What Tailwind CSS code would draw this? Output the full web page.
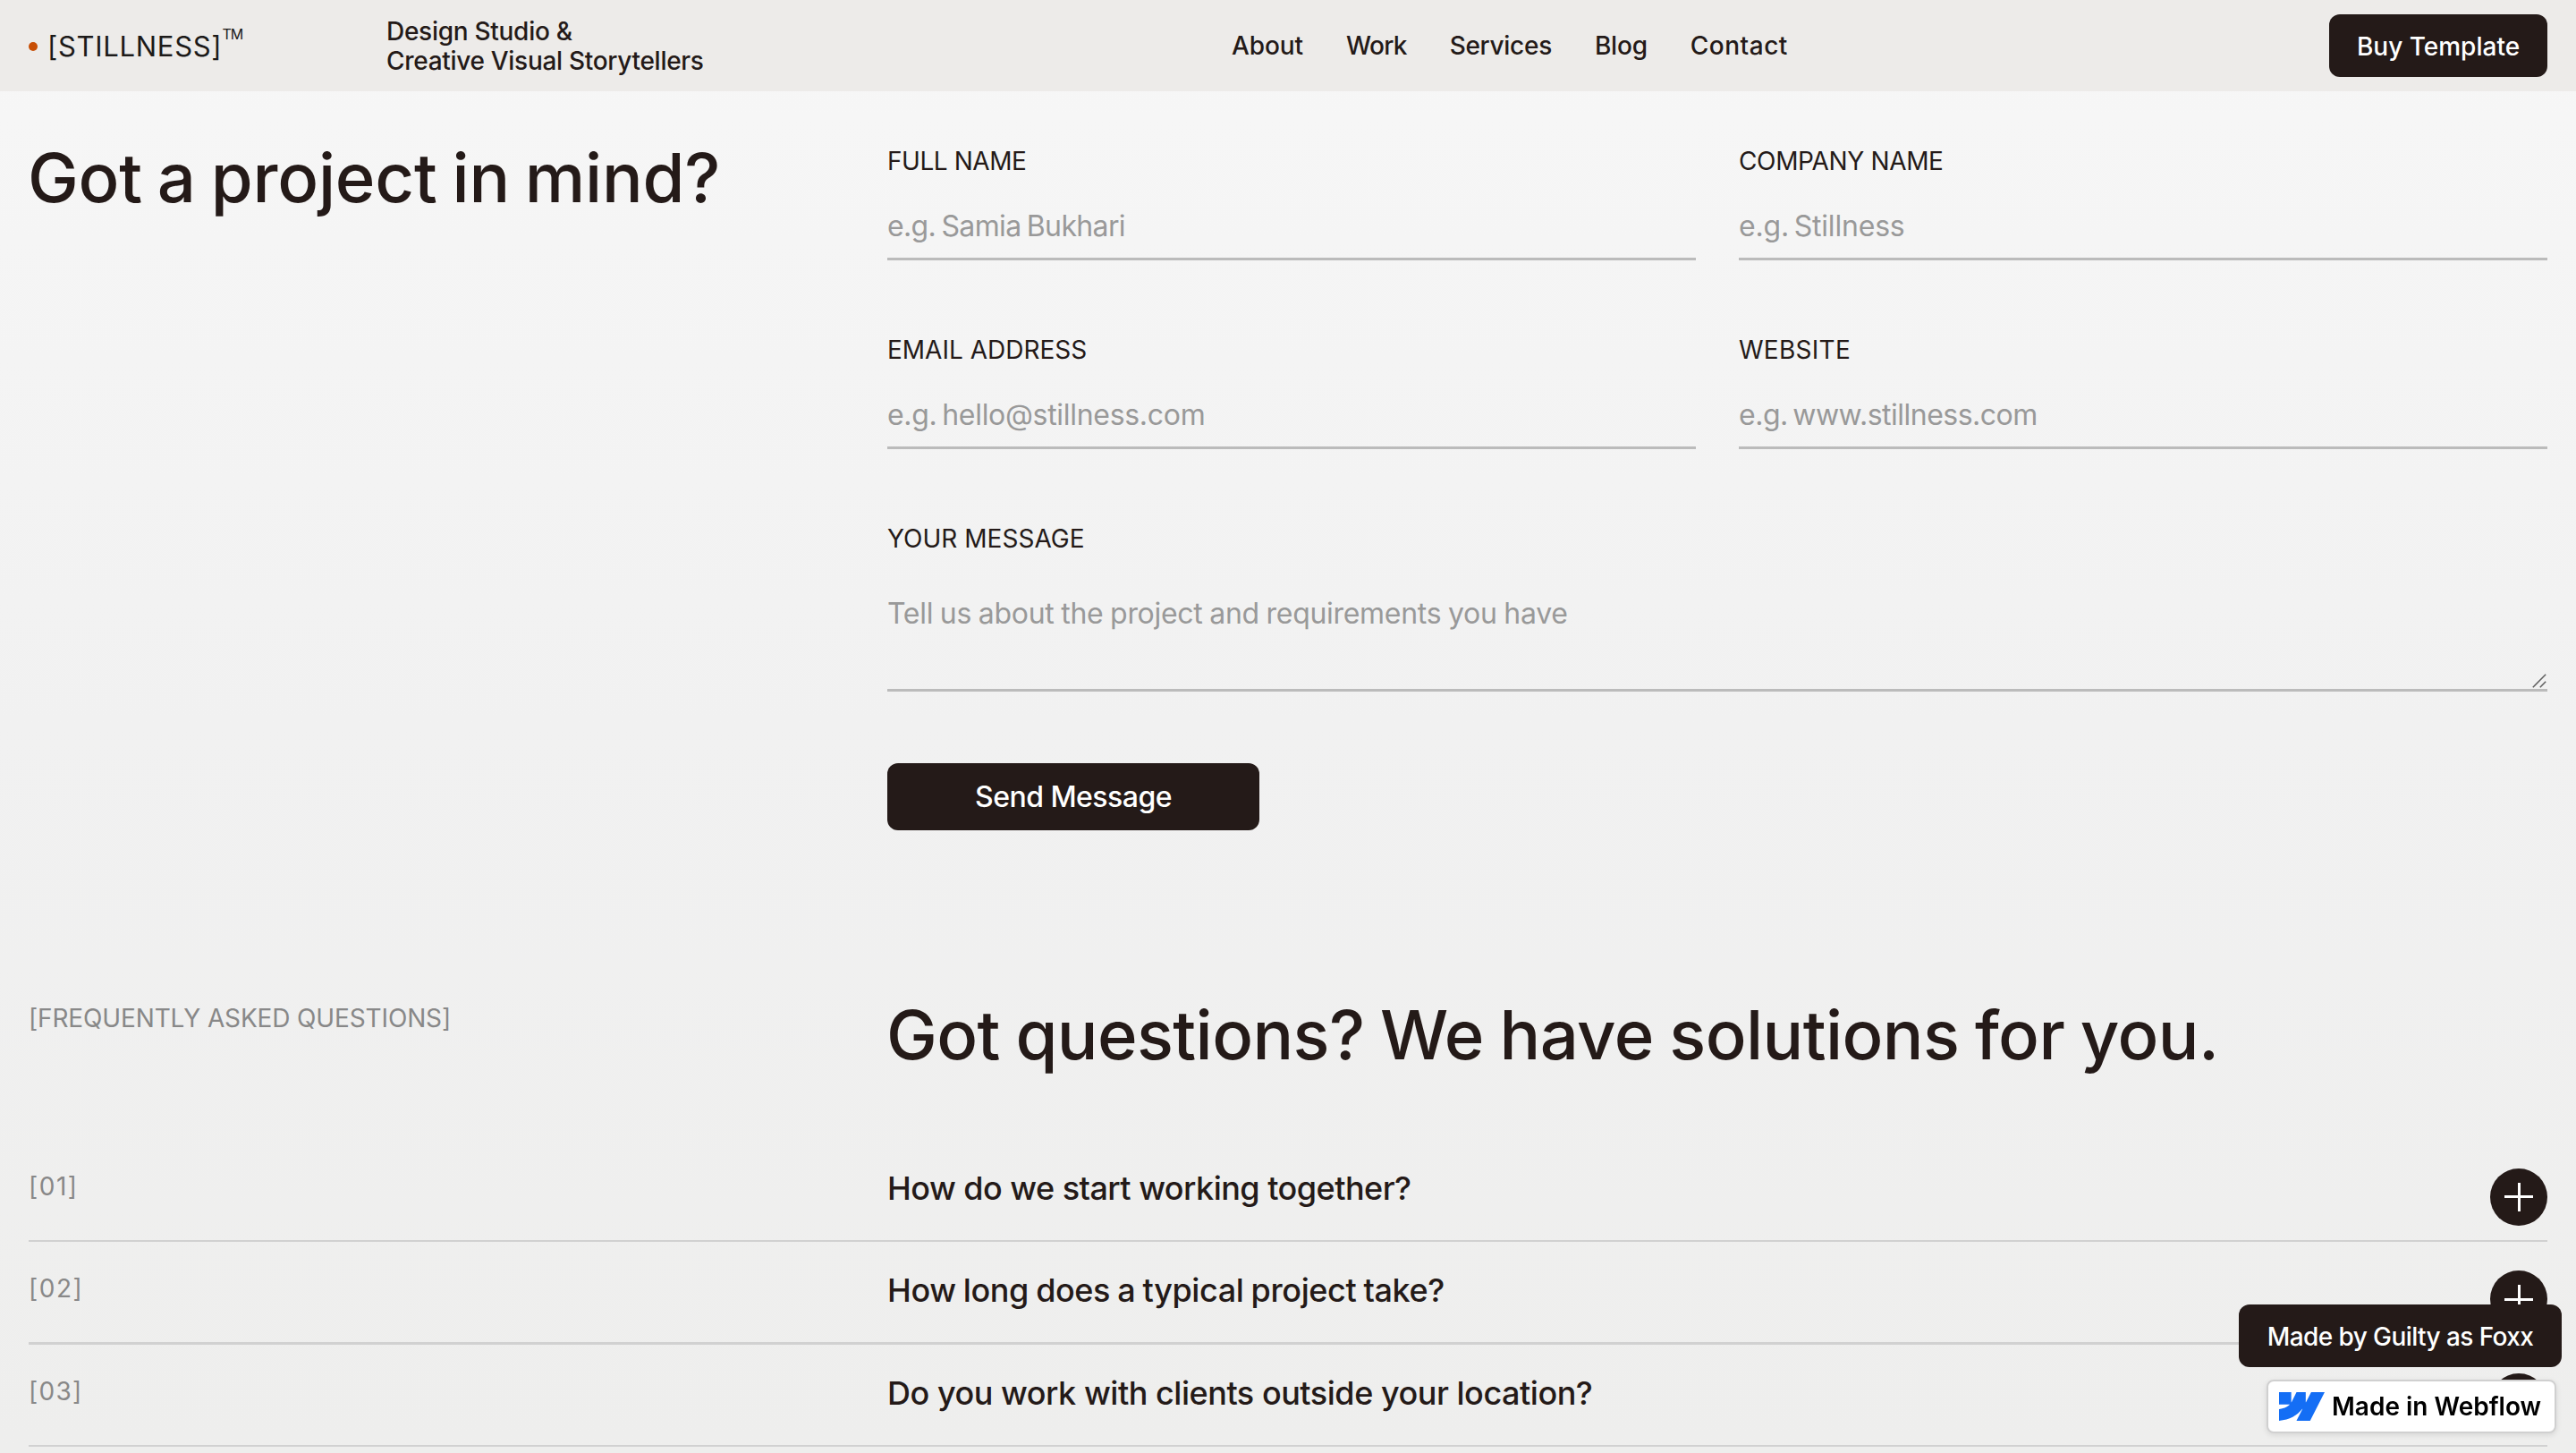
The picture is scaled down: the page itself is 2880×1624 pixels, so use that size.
<!DOCTYPE html>
<html lang="en">
<head>
  <meta charset="UTF-8">
  <meta name="viewport" content="width=device-width, initial-scale=1.0">
  <title>Stillness - Contact</title>
  <script src="https://cdn.jsdelivr.net/npm/@tailwindcss/browser@4"></script>
</head>
<body class="h-[1624px] overflow-hidden bg-linear-to-b from-[#f7f7f7] via-[#f1f1f1] to-[#eeeeed] font-['Inter','Liberation_Sans',sans-serif] text-[#241a18] antialiased">

  <!-- Navbar -->
  <header class="flex h-[102px] items-center bg-[#edebe9] px-8 text-[28px] font-medium">
    <a href="#" class="flex h-full w-[400px] items-center text-[#1c1a19]">
      <span class="mt-px mr-[11px] size-2.5 rounded-full bg-[#c84e05]"></span>
      <span class="mt-[2px] text-[31px] leading-[40px] font-normal tracking-[0.7px]">[STILLNESS]</span>
      <span class="mt-[30px] self-start text-[16px] leading-[16px] font-normal tracking-[-0.9px]">TM</span>
    </a>
    <div class="w-[945px] pt-[2px] leading-[33.3px]">
      <p class="tracking-[-0.28px]">Design Studio &amp;</p>
      <p class="tracking-[-0.3px]">Creative Visual Storytellers</p>
    </div>
    <nav class="flex gap-12">
      <a href="#" class="tracking-[-0.1px]">About</a>
      <a href="#" class="tracking-[-0.7px]">Work</a>
      <a href="#" class="tracking-[-0.3px]">Services</a>
      <a href="#" class="tracking-[-0.2px]">Blog</a>
      <a href="#" class="tracking-[0.5px]">Contact</a>
    </nav>
    <a href="#" class="ml-auto flex h-[70px] w-[244px] items-center justify-center rounded-xl bg-[#241a18] pt-[2px] text-white">Buy Template</a>
  </header>

  <main class="px-8">
    <!-- Contact form -->
    <section class="grid grid-cols-[960px_1fr] pt-[61px]">
      <h2 class="-mt-[7px] -ml-px text-[76px] leading-[84px] font-medium tracking-[-0.2px] [word-spacing:-3.2px]">Got a project in mind?</h2>
      <form>
        <div class="grid grid-cols-2 gap-x-12 gap-y-[83px] text-[28px] leading-[34px]">
          <div>
            <label for="name" class="block tracking-[-0.45px]">FULL NAME</label>
            <input id="name" type="text" placeholder="e.g. Samia Bukhari" class="block h-[94px] w-full border-b-3 border-[#bbbbbb] pt-5 text-[32px] tracking-[-0.65px] [word-spacing:-2px] outline-none placeholder:text-[#999999]">
          </div>
          <div>
            <label for="company" class="block tracking-[-0.35px]">COMPANY NAME</label>
            <input id="company" type="text" placeholder="e.g. Stillness" class="block h-[94px] w-full border-b-3 border-[#bbbbbb] pt-5 text-[32px] tracking-[-0.2px] [word-spacing:-3px] outline-none placeholder:text-[#999999]">
          </div>
          <div>
            <label for="email" class="block">EMAIL ADDRESS</label>
            <input id="email" type="email" placeholder="e.g. hello@stillness.com" class="block h-[94px] w-full border-b-3 border-[#bbbbbb] pt-5 text-[32px] tracking-[-0.3px] [word-spacing:-3px] outline-none placeholder:text-[#999999]">
          </div>
          <div>
            <label for="website" class="block tracking-[0.28px]">WEBSITE</label>
            <input id="website" type="text" placeholder="e.g. www.stillness.com" class="block h-[94px] w-full border-b-3 border-[#bbbbbb] pt-5 text-[32px] tracking-[-0.5px] [word-spacing:-3px] outline-none placeholder:text-[#999999]">
          </div>
          <div class="relative col-span-2">
            <label for="message" class="block tracking-[0.02px]">YOUR MESSAGE</label>
            <textarea id="message" placeholder="Tell us about the project and requirements you have" class="block h-[154px] w-full resize-none border-b-3 border-[#bbbbbb] pt-[47px] text-[32px] leading-[40px] tracking-[-0.29px] [word-spacing:-1px] outline-none placeholder:text-[#999999]"></textarea>
            <svg class="absolute right-px bottom-1 size-4" viewBox="0 0 16 16" fill="none" stroke="#5e5e5e" stroke-width="1.5">
              <path d="M.8 15.2 15.2.8M8.8 15.2l6.4-6.4"/>
            </svg>
          </div>
        </div>
        <button type="submit" class="mt-20 flex h-[75px] w-[416px] items-center justify-center rounded-xl bg-[#241a18] text-[32px] font-medium tracking-[-0.53px] text-white">Send Message</button>
      </form>
    </section>

    <!-- FAQ -->
    <section class="pt-[187px]">
      <div class="grid grid-cols-[960px_1fr]">
        <p class="pt-[6px] text-[28px] leading-[34px] tracking-[-0.14px] text-[#888888]">[FREQUENTLY ASKED QUESTIONS]</p>
        <h2 class="-mt-px mb-px -ml-px text-[76px] leading-[84px] font-medium tracking-[-0.6px] [word-spacing:-2px]">Got questions? We have solutions for you.</h2>
      </div>

      <div class="mt-[75px]">
        <div class="grid grid-cols-[960px_1fr_64px] border-b-2 border-[#d1d1d1] pt-8 pb-4">
          <span class="mt-[3px] text-[28px] leading-[34px] tracking-[1.5px] text-[#888888]">[01]</span>
          <h3 class="text-[36px] leading-[44px] font-medium tracking-[-0.53px]">How do we start working together?</h3>
          <svg class="size-16" viewBox="0 0 64 64"><circle cx="32" cy="32" r="32" fill="#241a18"/><path d="M16 30h32v3H16zM31 16h3v32h-3z" fill="#fff"/></svg>
        </div>
        <div class="grid grid-cols-[960px_1fr_64px] border-b-3 border-[#d1d1d1] pt-8 pb-4">
          <span class="mt-[3px] text-[28px] leading-[34px] tracking-[1.5px] text-[#888888]">[02]</span>
          <h3 class="text-[36px] leading-[44px] font-medium tracking-[-0.4px] [word-spacing:-1px]">How long does a typical project take?</h3>
          <svg class="size-16" viewBox="0 0 64 64"><circle cx="32" cy="32" r="32" fill="#241a18"/><path d="M16 31h32v3H16zM31 16h3v32h-3z" fill="#fff"/></svg>
        </div>
        <div class="grid grid-cols-[960px_1fr_64px] border-b-2 border-[#d1d1d1] pt-8 pb-4">
          <span class="mt-[3px] text-[28px] leading-[34px] tracking-[1.3px] text-[#888888]">[03]</span>
          <h3 class="text-[36px] leading-[44px] font-medium tracking-[-0.47px]">Do you work with clients outside your location?</h3>
          <svg class="size-16" viewBox="0 0 64 64"><circle cx="32" cy="32" r="32" fill="#241a18"/><path d="M16 31h32v3H16zM31 16h3v32h-3z" fill="#fff"/></svg>
        </div>
      </div>
    </section>
  </main>

  <!-- Floating badges -->
  <a href="#" class="fixed top-[1458px] right-4 flex h-[70px] w-[361px] items-center justify-center rounded-xl bg-[#241a18] pt-px text-[28px] font-medium tracking-[-0.58px] text-white">Made by Guilty as Foxx</a>
  <a href="#" class="fixed top-[1542px] right-[22px] flex h-[60px] w-[324px] items-center rounded-lg border-2 border-[#d0d0d0] bg-white pl-3 text-[28px] font-semibold text-black shadow-[0_2px_6px_rgba(0,0,0,0.1)]">
    <svg class="mr-2 h-8 w-[51px]" viewBox="0 0 1080 674" fill="#146ef5"><path d="M1080 0 735.4 673.7H411.7l144.2-279.2h-6.5C430.5 548.9 252.9 650.6 0 673.7V398.3s161.8-9.5 256.9-109.5H0V0h288.8v237.5h6.5L413.3 0h218.3v236h6.5L760.6 0z"/></svg>
    Made in Webflow
  </a>

</body>
</html>
